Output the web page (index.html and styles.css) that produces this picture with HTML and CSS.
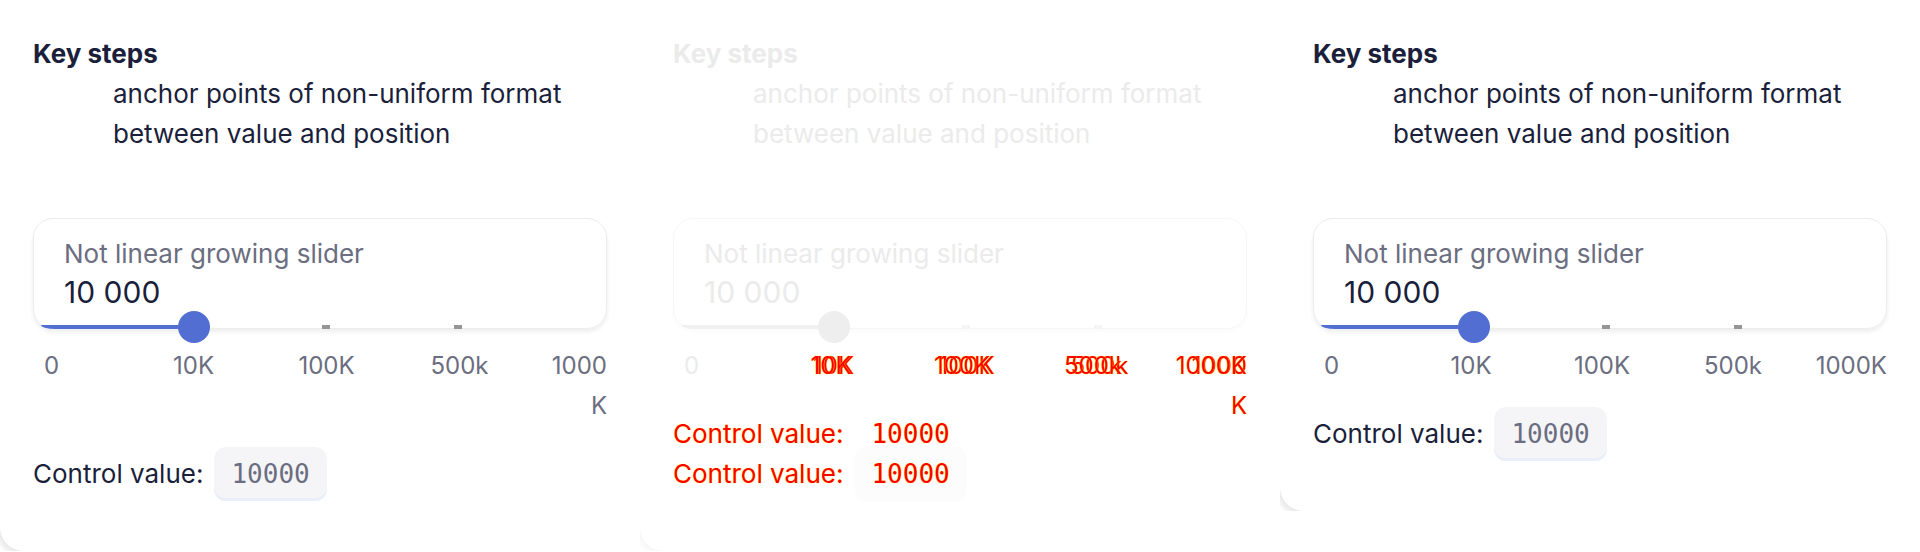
FILE: index.html
```html
<!DOCTYPE html>
<html lang="en">
<head>
<meta charset="utf-8">
<title>Input slider key steps — screenshot diff</title>
<link rel="stylesheet" href="styles.css">
</head>
<body>
<main class="diff">
  <section class="panel panel--base">
    <dl class="steps">
      <dt>Key steps</dt>
      <dd>anchor points of non-uniform format<br>between value and position</dd>
    </dl>
    <div class="field">
      <div class="field-label">Not linear growing slider</div>
      <div class="field-value">10 000</div>
      <div class="slider">
        <div class="rail" style="--p:25%">
          <span class="fill"></span>
          <span class="tick tick--2"></span>
          <span class="tick tick--3"></span>
          <span class="thumb"></span>
        </div>
      </div>
    </div>
    <div class="scale"><span>0</span><span>10K</span><span>100K</span><span>500k</span><span>1000K</span></div>
    <p class="control">Control value:<code>10000</code></p>
  </section>

  <section class="panel panel--diff">
    <div class="diff-stack">
      <div class="layer panel--base">
        <dl class="steps">
          <dt>Key steps</dt>
          <dd>anchor points of non-uniform format<br>between value and position</dd>
        </dl>
        <div class="field">
          <div class="field-label">Not linear growing slider</div>
          <div class="field-value">10 000</div>
          <div class="slider">
            <div class="rail" style="--p:25%">
              <span class="fill"></span>
              <span class="tick tick--2"></span>
              <span class="tick tick--3"></span>
              <span class="thumb"></span>
            </div>
          </div>
        </div>
        <div class="scale"><span>0</span><span class="hot">10K</span><span class="hot">100K</span><span class="hot">500k</span><span class="hot">1000K</span></div>
        <p class="control hot">Control value:<code>10000</code></p>
      </div>
      <div class="layer layer--ghost panel--fixed">
        <dl class="steps">
          <dt>Key steps</dt>
          <dd>anchor points of non-uniform format<br>between value and position</dd>
        </dl>
        <div class="field">
          <div class="field-label">Not linear growing slider</div>
          <div class="field-value">10 000</div>
          <div class="slider"><div class="rail" style="--p:25%"></div></div>
        </div>
        <div class="scale"><span>0</span><span class="hot">10K</span><span class="hot">100K</span><span class="hot">500k</span><span class="hot">1000K</span></div>
        <p class="control hot">Control value:<code>10000</code></p>
      </div>
    </div>
  </section>

  <section class="panel panel--fixed">
    <dl class="steps">
      <dt>Key steps</dt>
      <dd>anchor points of non-uniform format<br>between value and position</dd>
    </dl>
    <div class="field">
      <div class="field-label">Not linear growing slider</div>
      <div class="field-value">10 000</div>
      <div class="slider">
        <div class="rail" style="--p:25%">
          <span class="fill"></span>
          <span class="tick tick--2"></span>
          <span class="tick tick--3"></span>
          <span class="thumb"></span>
        </div>
      </div>
    </div>
    <div class="scale"><span>0</span><span>10K</span><span>100K</span><span>500k</span><span>1000K</span></div>
    <p class="control">Control value:<code>10000</code></p>
  </section>
</main>
</body>
</html>
```

FILE: styles.css
```css
* { box-sizing: border-box; }

body {
  margin: 0;
  background: #fff;
  font-family: Inter, "Noto Sans", sans-serif;
  color: #1b1f3b;
}

.diff {
  display: grid;
  grid-template-columns: repeat(3, 640px);
  align-items: start;
}

.panel {
  position: relative;
  padding: 34px 33px 50px;
  background: #fff;
  border-bottom-left-radius: 24px;
}

/* faint shadow showing only in the rounded bottom-left corner */
.panel::before {
  content: "";
  position: absolute;
  left: 0;
  bottom: 0;
  width: 24px;
  height: 24px;
  background: radial-gradient(circle at 100% 0, transparent 23.5px, rgba(0, 0, 0, 0.09) 24.5px, rgba(0, 0, 0, 0) 32px);
  pointer-events: none;
}
.panel--diff::before {
  background: radial-gradient(circle at 100% 0, transparent 23.5px, rgba(0, 0, 0, 0.03) 24.5px, rgba(0, 0, 0, 0) 32px);
}

.steps {
  margin: 0 0 64px;
  font-size: 26px;
  line-height: 40px;
}
.steps dt { font-weight: 700; }
.steps dd { margin: 0 0 0 80px; }

.field {
  height: 111px;
  display: flex;
  flex-direction: column;
  padding-top: 19px;
  border: 1px solid #ececec;
  border-radius: 20px;
  box-shadow: 0 3px 4px rgba(0, 0, 0, 0.07);
}

.field-label {
  padding: 0 30px;
  font-size: 26px;
  line-height: 32px;
  color: #6b6d80;
}

.field-value {
  padding: 0 30px;
  font-size: 30px;
  line-height: 44px;
}

.slider {
  margin: auto -1px -1px;
  height: 4px;
  padding: 0 17px 0 29px;
}

.rail {
  position: relative;
  height: 100%;
}

.fill {
  position: absolute;
  top: 0;
  bottom: 0;
  left: -21px;
  width: calc(var(--p) + 21px);
  background: #526ed3;
  border-bottom-left-radius: 14px 4px;
}

.tick {
  position: absolute;
  top: 0;
  width: 8px;
  height: 4px;
  margin-left: -4px;
  background: #959595;
}
.tick--2 { left: 50%; }
.tick--3 { left: 75%; }

.thumb {
  position: absolute;
  top: 50%;
  left: var(--p);
  width: 32px;
  height: 32px;
  margin: -16px 0 0 -16px;
  border-radius: 50%;
  background: #526ed3;
}

.scale {
  --first: 83px;
  --mid: 133px;
  display: grid;
  grid-template-columns: var(--first) var(--mid) var(--mid) var(--mid) 1fr;
  margin-top: 17px;
  padding-left: 11px;
  font-size: 24px;
  line-height: 40px;
  color: #6b6d80;
}
.panel--fixed .scale {
  --first: 81.5px;
  --mid: 131px;
}
.scale span { text-align: center; }
.scale span:first-child { text-align: left; }
.scale span:last-child {
  justify-self: end;
  text-align: right;
}
.panel--base .scale span:last-child {
  max-width: 62px;
  overflow-wrap: anywhere;
}

.control {
  margin: 21px 0 0;
  display: flex;
  align-items: center;
  gap: 11px;
  font-size: 26px;
  line-height: 40px;
}

.control code {
  padding: 7px 17px;
  border-radius: 12px;
  background: #f5f5f7;
  box-shadow: inset 0 -3px 0 #eaeefb;
  font-family: "DejaVu Sans Mono", "Liberation Mono", monospace;
  font-size: 26px;
  line-height: 40px;
  color: #6b6d80;
}

/* diff panel */
.diff-stack { display: grid; }
.layer { grid-area: 1 / 1; }

.panel--diff { color: #ebebeb; }
.panel--diff .field {
  border-color: #f7f7f7;
  box-shadow: 0 3px 4px rgba(0, 0, 0, 0.015);
}
.panel--diff .field-label,
.panel--diff .scale,
.panel--diff .control code { color: #ebebeb; }
.panel--diff .fill { background: #f0f0f0; }
.panel--diff .tick { background: #f5f5f5; }
.panel--diff .thumb { background: #eeeeee; }
.panel--diff .control code {
  background: #fcfcfc;
  box-shadow: none;
}

.panel--diff .hot,
.panel--diff .hot code {
  color: #ff0000;
  text-shadow: 0 0 1px #ffff00;
}

.layer--ghost { visibility: hidden; }
.layer--ghost .hot { visibility: visible; }
.layer--ghost .control code { background: transparent; }
```
